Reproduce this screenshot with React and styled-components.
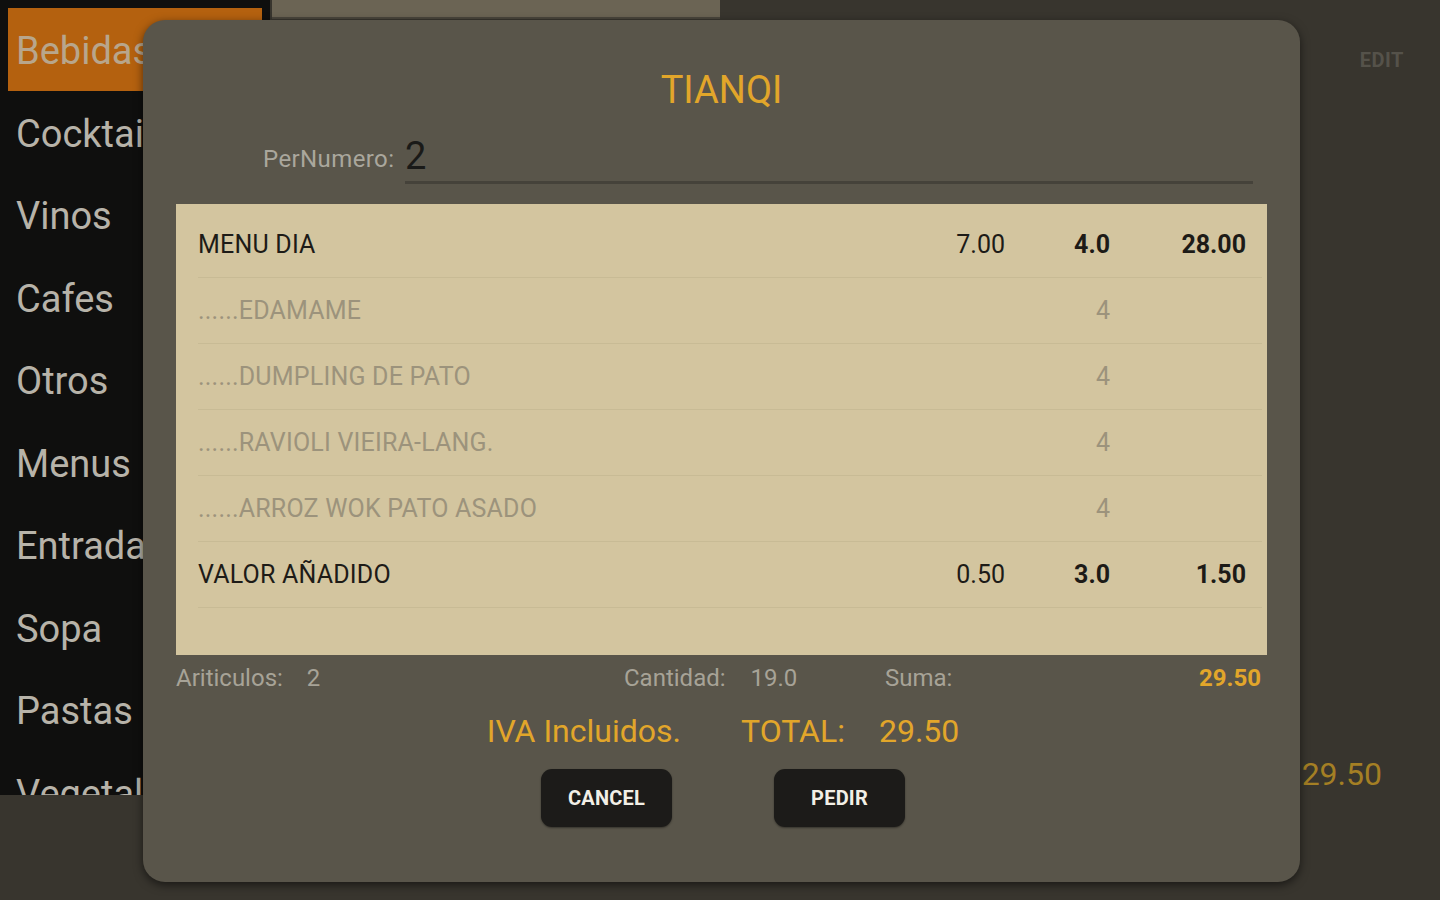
import React from "react";
import styled, { createGlobalStyle } from "styled-components";

const Global = createGlobalStyle`
  html, body { margin: 0; padding: 0; }
  body {
    width: 1440px; height: 900px; overflow: hidden;
    background: #38352e;
    font-family: Roboto, "Liberation Sans", sans-serif;
  }
`;

const Page = styled.div`
  position: relative;
  width: 1440px;
  height: 900px;
  display: flex;
  background: #38352e;
`;

const Sidebar = styled.nav`
  width: 270px;
  height: 795px;
  background: #0f0f0e;
  box-sizing: border-box;
  padding: 8px 8px 0 8px;
  overflow: hidden;
  flex-shrink: 0;
  display: flex;
  flex-direction: column;
`;

const SideItem = styled.div`
  height: 82.5px;
  box-sizing: border-box;
  flex-shrink: 0;
  display: flex;
  align-items: center;
  padding: 4px 0 0 8px;
  font-size: 38px;
  color: ${p => (p.$active ? "#b8a68c" : "#b7b3a9")};
  background: ${p => (p.$active ? "#b4610f" : "transparent")};
  white-space: nowrap;
`;

const Main = styled.div`
  flex: 1;
  display: flex;
  flex-direction: column;
  padding-left: 2px;
`;

const TopRow = styled.div`
  display: flex;
  align-items: flex-start;
`;

const TopPanel = styled.div`
  width: 448px;
  height: 17px;
  background: #6b6454;
  border-bottom: 2px solid #4a463c;
`;

const EditLabel = styled.div`
  margin-left: auto;
  margin-top: 48px;
  margin-right: 36px;
  font-size: 20px;
  font-weight: 700;
  color: #55524a;
  letter-spacing: 0.5px;
`;

const BgTotal = styled.div`
  margin-top: auto;
  margin-bottom: 107px;
  align-self: flex-end;
  margin-right: 58px;
  font-size: 32px;
  color: #a47f24;
`;

const Modal = styled.div`
  position: absolute;
  left: 143px;
  top: 20px;
  width: 1157px;
  height: 862px;
  box-sizing: border-box;
  background: #59554a;
  border-radius: 22px;
  box-shadow: 0 3px 10px rgba(0, 0, 0, 0.55);
  padding: 45px 33px 0 33px;
  display: flex;
  flex-direction: column;
`;

const Title = styled.h1`
  margin: 0;
  height: 50px;
  line-height: 50px;
  text-align: center;
  font-size: 38px;
  font-weight: 400;
  color: #e2a62a;
`;

const NumberRow = styled.div`
  display: flex;
  align-items: flex-end;
  margin-top: 17px;
  padding-left: 87px;
  padding-right: 14px;
`;

const NumberLabel = styled.span`
  width: 142px;
  flex-shrink: 0;
  font-size: 24px;
  color: #aaa79d;
  padding-bottom: 11px;
  letter-spacing: 0.4px;
`;

const NumberInput = styled.div`
  flex: 1;
  height: 52px;
  box-sizing: border-box;
  border-bottom: 3px solid #45423a;
  font-size: 38px;
  line-height: 48px;
  color: #1a1a18;
`;

const Table = styled.div`
  margin-top: 20px;
  height: 451px;
  background: #d3c59f;
  box-sizing: border-box;
  padding: 8px 5px 0 22px;
  overflow: hidden;
`;

const Row = styled.div`
  display: grid;
  grid-template-columns: 1fr 100px 105px 136px;
  align-items: center;
  height: 66px;
  box-sizing: border-box;
  border-bottom: 1px solid ${p => (p.$last ? "#d0c39d" : "#c8bb95")};
  padding-right: 16px;
  font-size: 25px;
  color: ${p => (p.$sub ? "#9c937c" : "#1d1b17")};
`;

const Name = styled.span`
  white-space: nowrap;
  letter-spacing: 0.2px;
`;

const Num = styled.span`
  text-align: right;
  font-weight: ${p => (p.$bold ? 700 : 400)};
`;

const Summary = styled.div`
  display: grid;
  grid-template-columns: 448px 261px 1fr auto;
  align-items: center;
  height: 30px;
  margin-top: 8px;
  padding-right: 6px;
  font-size: 24px;
  color: #a7a397;
`;

const Gap = styled.span`
  display: inline-block;
  width: ${p => p.$w}px;
`;

const SumValue = styled.span`
  color: #e2a62a;
  font-weight: 700;
`;

const TotalRow = styled.div`
  display: flex;
  justify-content: center;
  align-items: center;
  margin-top: 16px;
  height: 44px;
  font-size: 32px;
  color: #e2a62a;
  padding-left: 3px;
`;

const TotalPart = styled.span`
  margin-left: ${p => p.$gap || 0}px;
`;

const Buttons = styled.div`
  display: flex;
  justify-content: center;
  gap: 102px;
  margin-top: 16px;
  padding-left: 3px;
`;

const Button = styled.button`
  width: 131px;
  height: 58px;
  border: none;
  border-radius: 11px;
  background: #1c1b19;
  color: #f2efe6;
  font-family: Roboto, "Liberation Sans", sans-serif;
  font-size: 20px;
  font-weight: 700;
  letter-spacing: 0.2px;
  box-shadow: 0 1px 2px rgba(0, 0, 0, 0.4);
`;

const sideItems = [
  "Bebidas",
  "Cocktails",
  "Vinos",
  "Cafes",
  "Otros",
  "Menus",
  "Entradas",
  "Sopa",
  "Pastas",
  "Vegetales",
];

const rows = [
  { name: "MENU DIA", price: "7.00", qty: "4.0", total: "28.00" },
  { name: "......EDAMAME", qty: "4", sub: true },
  { name: "......DUMPLING DE PATO", qty: "4", sub: true },
  { name: "......RAVIOLI VIEIRA-LANG.", qty: "4", sub: true },
  { name: "......ARROZ WOK PATO ASADO", qty: "4", sub: true },
  { name: "VALOR AÑADIDO", price: "0.50", qty: "3.0", total: "1.50" },
];

export default function App() {
  return (
    <>
      <Global />
      <Page>
        <Sidebar>
          {sideItems.map((s, i) => (
            <SideItem key={s} $active={i === 0}>
              {s}
            </SideItem>
          ))}
        </Sidebar>
        <Main>
          <TopRow>
            <TopPanel />
            <EditLabel>EDIT</EditLabel>
          </TopRow>
          <BgTotal>29.50</BgTotal>
        </Main>

        <Modal>
          <Title>TIANQI</Title>
          <NumberRow>
            <NumberLabel>PerNumero:</NumberLabel>
            <NumberInput>2</NumberInput>
          </NumberRow>
          <Table>
            {rows.map((r, i) => (
              <Row key={i} $sub={r.sub}>
                <Name>{r.name}</Name>
                <Num>{r.price || ""}</Num>
                <Num $bold={!r.sub}>{r.qty}</Num>
                <Num $bold>{r.total || ""}</Num>
              </Row>
            ))}
            <Row $last />
          </Table>
          <Summary>
            <span>Ariticulos:<Gap $w={24} />2</span>
            <span>Cantidad:<Gap $w={25} />19.0</span>
            <span>Suma:</span>
            <SumValue>29.50</SumValue>
          </Summary>
          <TotalRow>
            <TotalPart>IVA Incluidos.</TotalPart>
            <TotalPart $gap={60}>TOTAL:</TotalPart>
            <TotalPart $gap={34}>29.50</TotalPart>
          </TotalRow>
          <Buttons>
            <Button>CANCEL</Button>
            <Button>PEDIR</Button>
          </Buttons>
        </Modal>
      </Page>
    </>
  );
}
